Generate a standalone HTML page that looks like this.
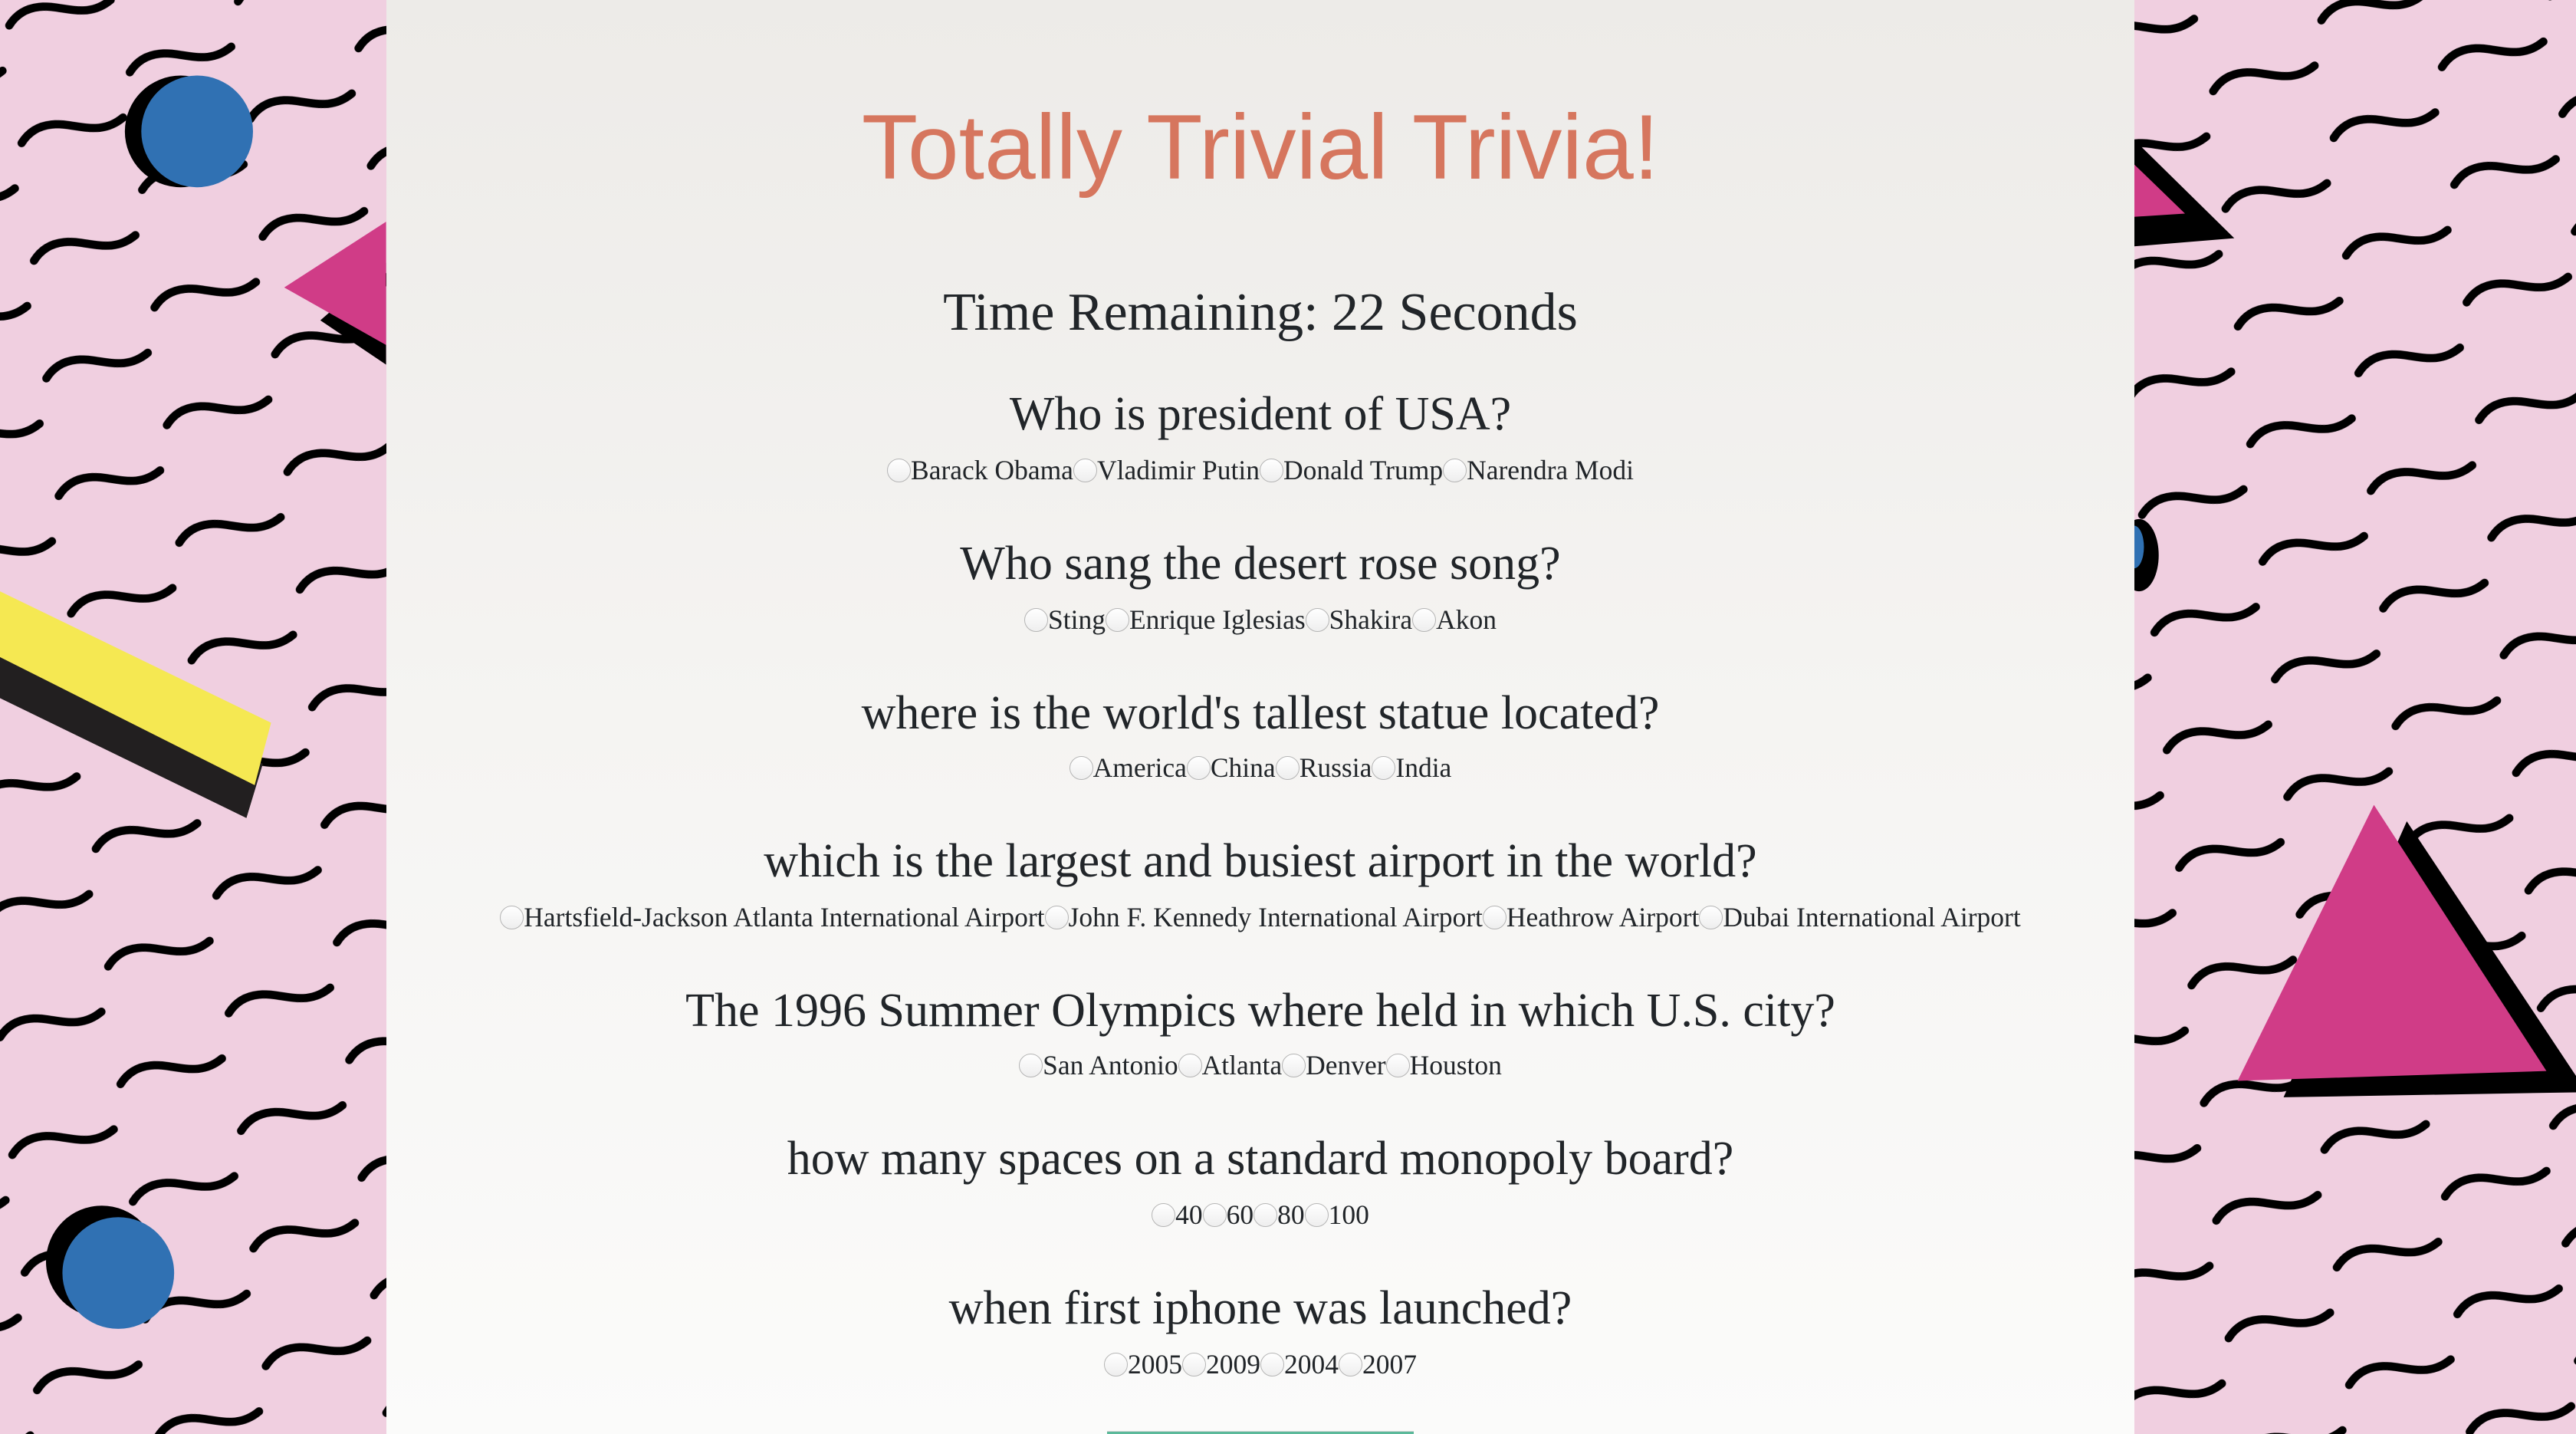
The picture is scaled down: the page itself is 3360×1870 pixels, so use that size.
<!DOCTYPE html>
<html><head><meta charset="utf-8"><style>
html,body{margin:0;padding:0;width:3360px;height:1870px;overflow:hidden;background:#f0cfe0;}
#bg{position:absolute;left:0;top:0;width:3360px;height:1870px;}
#panel{position:absolute;left:504px;top:0;width:2280px;height:1870px;overflow:hidden;background:linear-gradient(#edebe8,#f5f4f2 50%,#fbfbfa);}
.l{position:absolute;left:0;width:2280px;text-align:center;white-space:nowrap;color:#212529;font-family:"Liberation Serif",serif;}
h1{position:absolute;left:0;width:2280px;top:120px;margin:0;text-align:center;font:120px/1.2 "Liberation Sans",sans-serif;color:#d6765e;}
.t{top:368px;font-size:70px;line-height:80px;}
.q{font-size:62px;line-height:70px;}
.o{font-size:35.5px;line-height:40px;display:flex;justify-content:center;align-items:center;}
.r{display:inline-block;width:29px;height:29px;border-radius:50%;border:1px solid #b5b5b5;background:linear-gradient(#fff,#eee);vertical-align:middle;}
#btn{position:absolute;left:940px;top:1866px;width:400px;height:4px;background:#5bb99a;border-top:1px solid #d6d6d6;}
</style></head><body>
<svg id="bg" viewBox="0 0 1568 873" preserveAspectRatio="none" xmlns="http://www.w3.org/2000/svg">
<defs>
<pattern id="sq" width="140" height="72" patternUnits="userSpaceOnUse" patternTransform="rotate(-6)">
<path d="M4 16 C11 7 21 5 33 8 S55 15 67 7" fill="none" stroke="#000" stroke-width="5" stroke-linecap="round"/>
<path d="M74 52 C81 43 91 41 103 44 S125 51 137 43" fill="none" stroke="#000" stroke-width="5" stroke-linecap="round"/>
</pattern>
</defs>
<rect width="1568" height="873" fill="#f0cfe0"/>
<rect x="-50" y="-50" width="1700" height="1000" fill="url(#sq)"/>
<ellipse cx="110" cy="80" rx="34" ry="34" fill="#000"/>
<ellipse cx="120" cy="80" rx="34" ry="34" fill="#3071b3"/>
<polygon points="195,195 235,160 235,222" fill="#000"/>
<polygon points="173,175 235,135 235,210" fill="#d03c87"/>
<polygon points="0,385 160,465 150,498 0,425" fill="#221f20"/>
<polygon points="0,360 165,440 155,478 0,400" fill="#f5e852"/>
<ellipse cx="62" cy="768" rx="34" ry="34" fill="#000"/>
<ellipse cx="72" cy="775" rx="34" ry="34" fill="#3071b3"/>
<polygon points="1299,85 1360,145 1299,150" fill="#000"/>
<polygon points="1299,100 1330,130 1299,132" fill="#d03c87"/>
<ellipse cx="1302" cy="338" rx="12" ry="22" fill="#000"/>
<ellipse cx="1299" cy="333" rx="6" ry="13" fill="#3071b3"/>
<polygon points="1465,500 1568,655 1568,665 1390,668" fill="#000"/>
<polygon points="1445,490 1362,658 1550,652" fill="#d03c87"/>
</svg>
<div id="panel">
<h1>Totally Trivial Trivia!</h1>
<div class="l t">Time Remaining: 22 Seconds</div>

<div class="l q" style="top:505px">Who is president of USA?</div>
<div class="l o" style="top:593px"><span class="r"></span>Barack Obama<span class="r"></span>Vladimir Putin<span class="r"></span>Donald Trump<span class="r"></span>Narendra Modi</div>

<div class="l q" style="top:700px">Who sang the desert rose song?</div>
<div class="l o" style="top:788px"><span class="r"></span>Sting<span class="r"></span>Enrique Iglesias<span class="r"></span>Shakira<span class="r"></span>Akon</div>

<div class="l q" style="top:895px">where is the world's tallest statue located?</div>
<div class="l o" style="top:981px"><span class="r"></span>America<span class="r"></span>China<span class="r"></span>Russia<span class="r"></span>India</div>

<div class="l q" style="top:1088px">which is the largest and busiest airport in the world?</div>
<div class="l o" style="top:1176px"><span class="r"></span>Hartsfield-Jackson Atlanta International Airport<span class="r"></span>John F. Kennedy International Airport<span class="r"></span>Heathrow Airport<span class="r"></span>Dubai International Airport</div>

<div class="l q" style="top:1283px">The 1996 Summer Olympics where held in which U.S. city?</div>
<div class="l o" style="top:1369px"><span class="r"></span>San Antonio<span class="r"></span>Atlanta<span class="r"></span>Denver<span class="r"></span>Houston</div>

<div class="l q" style="top:1476px">how many spaces on a standard monopoly board?</div>
<div class="l o" style="top:1564px"><span class="r"></span>40<span class="r"></span>60<span class="r"></span>80<span class="r"></span>100</div>

<div class="l q" style="top:1671px">when first iphone was launched?</div>
<div class="l o" style="top:1759px"><span class="r"></span>2005<span class="r"></span>2009<span class="r"></span>2004<span class="r"></span>2007</div>

<div id="btn"></div>
</div>
</body></html>
